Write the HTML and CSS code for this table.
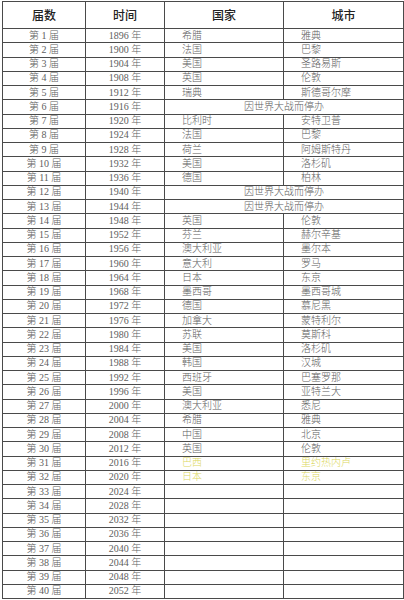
FILE: index.html
```html
<!DOCTYPE html>
<html lang="zh">
<head>
<meta charset="utf-8">
<title>历届奥运会</title>
<link rel="stylesheet" href="styles.css">
</head>
<body>
<table class="games">
<colgroup><col class="c1"><col class="c2"><col class="c3"><col class="c4"></colgroup>
<thead>
<tr class="head"><th>届数</th><th>时间</th><th>国家</th><th>城市</th></tr>
</thead>
<tbody>
<tr><td>第 1 届</td><td>1896 年</td><td class="l">希腊</td><td class="l">雅典</td></tr>
<tr><td>第 2 届</td><td>1900 年</td><td class="l">法国</td><td class="l">巴黎</td></tr>
<tr><td>第 3 届</td><td>1904 年</td><td class="l">美国</td><td class="l">圣路易斯</td></tr>
<tr><td>第 4 届</td><td>1908 年</td><td class="l">英国</td><td class="l">伦敦</td></tr>
<tr><td>第 5 届</td><td>1912 年</td><td class="l">瑞典</td><td class="l">斯德哥尔摩</td></tr>
<tr><td>第 6 届</td><td>1916 年</td><td colspan="2">因世界大战而停办</td></tr>
<tr><td>第 7 届</td><td>1920 年</td><td class="l">比利时</td><td class="l">安特卫普</td></tr>
<tr><td>第 8 届</td><td>1924 年</td><td class="l">法国</td><td class="l">巴黎</td></tr>
<tr><td>第 9 届</td><td>1928 年</td><td class="l">荷兰</td><td class="l">阿姆斯特丹</td></tr>
<tr><td>第 10 届</td><td>1932 年</td><td class="l">美国</td><td class="l">洛杉矶</td></tr>
<tr><td>第 11 届</td><td>1936 年</td><td class="l">德国</td><td class="l">柏林</td></tr>
<tr><td>第 12 届</td><td>1940 年</td><td colspan="2">因世界大战而停办</td></tr>
<tr><td>第 13 届</td><td>1944 年</td><td colspan="2">因世界大战而停办</td></tr>
<tr><td>第 14 届</td><td>1948 年</td><td class="l">英国</td><td class="l">伦敦</td></tr>
<tr><td>第 15 届</td><td>1952 年</td><td class="l">芬兰</td><td class="l">赫尔辛基</td></tr>
<tr><td>第 16 届</td><td>1956 年</td><td class="l">澳大利亚</td><td class="l">墨尔本</td></tr>
<tr><td>第 17 届</td><td>1960 年</td><td class="l">意大利</td><td class="l">罗马</td></tr>
<tr><td>第 18 届</td><td>1964 年</td><td class="l">日本</td><td class="l">东京</td></tr>
<tr><td>第 19 届</td><td>1968 年</td><td class="l">墨西哥</td><td class="l">墨西哥城</td></tr>
<tr><td>第 20 届</td><td>1972 年</td><td class="l">德国</td><td class="l">慕尼黑</td></tr>
<tr><td>第 21 届</td><td>1976 年</td><td class="l">加拿大</td><td class="l">蒙特利尔</td></tr>
<tr><td>第 22 届</td><td>1980 年</td><td class="l">苏联</td><td class="l">莫斯科</td></tr>
<tr><td>第 23 届</td><td>1984 年</td><td class="l">美国</td><td class="l">洛杉矶</td></tr>
<tr><td>第 24 届</td><td>1988 年</td><td class="l">韩国</td><td class="l">汉城</td></tr>
<tr><td>第 25 届</td><td>1992 年</td><td class="l">西班牙</td><td class="l">巴塞罗那</td></tr>
<tr><td>第 26 届</td><td>1996 年</td><td class="l">美国</td><td class="l">亚特兰大</td></tr>
<tr><td>第 27 届</td><td>2000 年</td><td class="l">澳大利亚</td><td class="l">悉尼</td></tr>
<tr><td>第 28 届</td><td>2004 年</td><td class="l">希腊</td><td class="l">雅典</td></tr>
<tr><td>第 29 届</td><td>2008 年</td><td class="l">中国</td><td class="l">北京</td></tr>
<tr><td>第 30 届</td><td>2012 年</td><td class="l">英国</td><td class="l">伦敦</td></tr>
<tr><td>第 31 届</td><td>2016 年</td><td class="l hl">巴西</td><td class="l hl">里约热内卢</td></tr>
<tr><td>第 32 届</td><td>2020 年</td><td class="l hl">日本</td><td class="l hl">东京</td></tr>
<tr><td>第 33 届</td><td>2024 年</td><td></td><td></td></tr>
<tr><td>第 34 届</td><td>2028 年</td><td></td><td></td></tr>
<tr><td>第 35 届</td><td>2032 年</td><td></td><td></td></tr>
<tr><td>第 36 届</td><td>2036 年</td><td></td><td></td></tr>
<tr><td>第 37 届</td><td>2040 年</td><td></td><td></td></tr>
<tr><td>第 38 届</td><td>2044 年</td><td></td><td></td></tr>
<tr><td>第 39 届</td><td>2048 年</td><td></td><td></td></tr>
<tr><td>第 40 届</td><td>2052 年</td><td></td><td></td></tr>
</tbody>
</table>
</body>
</html>
```

FILE: styles.css
```css
html, body {
  margin: 0;
  padding: 0;
  background: #ffffff;
}
body {
  padding: 1px 2px 0 2px;
}
.games {
  border-collapse: collapse;
  table-layout: fixed;
  width: 401px;
  font-family: "Liberation Serif", "Noto Sans CJK SC", serif;
  font-size: 10px;
  font-weight: 300;
  color: #606060;
}
.games .c1 { width: 83px; }
.games .c2 { width: 79px; }
.games .c3 { width: 119px; }
.games .c4 { width: 120px; }
.games th, .games td {
  border: 1px solid #4a4a4a;
  padding: 0;
  text-align: center;
  vertical-align: middle;
  white-space: nowrap;
  overflow: hidden;
  line-height: 12px;
}
.games .head th {
  height: 26px;
  font-family: "Noto Sans CJK SC", sans-serif;
  font-size: 12px;
  font-weight: 500;
  color: #222222;
}
.games tbody td {
  height: 13.25px;
}
.games td.l {
  text-align: left;
  padding-left: 17px;
}
.games td.hl {
  color: #dcd860;
}
```
